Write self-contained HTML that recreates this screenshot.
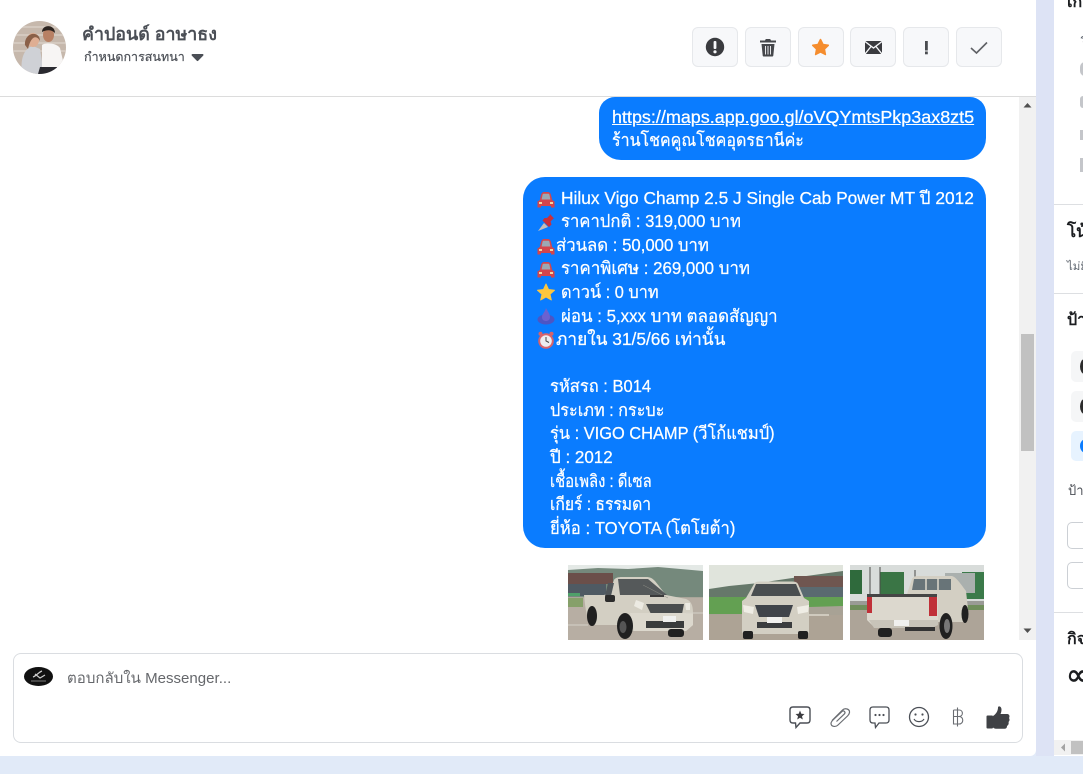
<!DOCTYPE html>
<html lang="th"><head><meta charset="utf-8">
<style>
html,body{margin:0;padding:0;width:1083px;height:774px;overflow:hidden;background:#e1eaf8;font-family:"Liberation Sans","Noto Sans CJK SC",sans-serif;color:#050505}
div,span,a,svg{position:absolute}
#main{left:0;top:0;width:1036px;height:756px;background:#fff;border-bottom-right-radius:6px}
#hline{left:0;top:96px;width:1036px;height:1px;background:#dcdcdc}
.btn{top:27px;width:44px;height:38px;background:#f7f8fa;border:1px solid #e6e8eb;border-radius:6px}
.btn svg{left:0;top:0}
.bub{background:#0a7cff}
.l{color:#fff;font-size:17.5px;line-height:24px;white-space:nowrap;height:24px;transform-origin:0 50%;-webkit-text-stroke:.25px #fff}
#sb{left:1019px;top:97px;width:17px;height:543px;background:#f1f1f1}
#right{left:1054px;top:0;width:29px;height:756px;background:#fff;overflow:hidden}
#right div{white-space:nowrap}
</style></head><body>
<div style="left:1036px;top:0;width:18px;height:756px;background:#dde3f5"></div>
<div id="main"></div>

<!-- avatar -->
<svg style="left:13px;top:21px" width="53" height="53" viewBox="0 0 53 53">
<defs><clipPath id="c"><circle cx="26.500" cy="26.500" r="26.500"/></clipPath></defs>
<g clip-path="url(#c)">
<rect width="53" height="53" fill="#c6b8ac"/>
<path d="M0 14H53M0 22H53M0 6H53M0 30H53" stroke="#d4c9bf" stroke-width="2"/>
<path d="M9 53C7 38 11 27 20 25L27 28L31 53Z" fill="#cfd1d6"/>
<ellipse cx="20" cy="19" rx="6" ry="7" fill="#dfae93"/>
<path d="M12 24C11 11 27 9 27 20C24 14 18 14 15 28Z" fill="#8a6048"/>
<path d="M29 53V24C32 21 44 22 47 27L51 44L46 46V53Z" fill="#f7f5f4"/>
<ellipse cx="35.500" cy="14" rx="5.500" ry="7" fill="#b88064"/>
<path d="M29 11C29 3 42 3 42 12C38 8 33 9 29 11Z" fill="#2c2420"/>
<path d="M25 53L27 46H44V53Z" fill="#2a2a30"/>
</g></svg>

<div style="left:82px;top:22px;font-size:17.500px;line-height:24px;color:#4b4f56;font-weight:700;white-space:nowrap;transform:scaleX(1.02);transform-origin:0 50%">คำปอนด์ อาษาธง</div>
<div style="left:84px;top:48px;font-size:12.500px;line-height:18px;color:#4b4f56;white-space:nowrap;-webkit-text-stroke:.2px #4b4f56">กำหนดการสนทนา</div>
<svg style="left:191px;top:54px" width="13" height="8" viewBox="0 0 13 8"><path d="M0.500 1C0.500 0.500 1 0 1.500 0H11.500C12.500 0 12.800 1 12.200 1.600L7.200 6.800C6.800 7.200 6.200 7.200 5.800 6.800L0.800 1.600Z" fill="#4b4f56"/></svg>
<div id="hline"></div>

<!-- header buttons -->
<div class="btn" style="left:692px"><svg width="44" height="38" viewBox="0 0 44 38"><circle cx="22" cy="19" r="9.200" fill="#3a3b3f"/><rect x="20.600" y="13" width="2.800" height="8" rx="1" fill="#f7f8fa"/><circle cx="22" cy="23.800" r="1.600" fill="#f7f8fa"/></svg></div>
<div class="btn" style="left:745px"><svg width="44" height="38" viewBox="0 0 44 38"><path d="M19.800 11H24.200L25 12.500H30V14.500H14V12.500H19Z" fill="#45474b"/><path d="M15.500 16H28.500L27.300 27.500C27.200 28.300 26.800 28.500 26.100 28.500H17.900C17.200 28.500 16.800 28.300 16.700 27.500Z" fill="#45474b"/><path d="M19.500 18V26.500M22 18V26.500M24.500 18V26.500" stroke="#f7f8fa" stroke-width=".9"/></svg></div>
<div class="btn" style="left:798px"><svg width="44" height="38" viewBox="0 0 44 38"><path d="M21.500 11.500L24 16.500L29.300 17.300L25.400 21.100L26.400 26.500L21.500 23.900L16.600 26.500L17.600 21.100L13.700 17.300L19 16.500Z" fill="#f58d2e" stroke="#f58d2e" stroke-width="1.500" stroke-linejoin="round"/></svg></div>
<div class="btn" style="left:850px"><svg width="44" height="38" viewBox="0 0 44 38"><rect x="14" y="13" width="17" height="13" rx="1" fill="#3a3b3f"/><path d="M14 13.500L22.500 20L31 13.500M14 26L20 18.500M31 26L25 18.500" stroke="#f7f8fa" stroke-width="1.400" fill="none"/></svg></div>
<div class="btn" style="left:903px"><svg width="44" height="38" viewBox="0 0 44 38"><rect x="21" y="13" width="2.800" height="9.500" fill="#4a4c50"/><rect x="21" y="23.500" width="2.800" height="2.800" fill="#4a4c50"/></svg></div>
<div class="btn" style="left:956px"><svg width="44" height="38" viewBox="0 0 44 38"><path d="M14 20L19.500 25L30 14.500" stroke="#5f6165" stroke-width="1.600" fill="none"/></svg></div>

<!-- bubble 1 -->
<div class="bub" style="left:599px;top:97px;width:387px;height:63px;border-radius:16px 16px 22px 22px"></div>
<div class="l" style="left:612px;top:105px;text-decoration:underline;transform:scaleX(1.0255)">https://maps.app.goo.gl/oVQYmtsPkp3ax8zt5</div>
<div class="l" style="left:612px;top:128px;transform:scaleX(.914)">ร้านโชคคูณโชคอุดรธานีค่ะ</div>

<!-- bubble 2 -->
<div class="bub" style="left:523px;top:177px;width:463px;height:371px;border-radius:22px"></div>
<svg style="left:537px;top:189px" width="19" height="170" viewBox="0 0 19 170">
<g id="car"><path d="M0.500 18.500V12.500L2.800 11L4 6C4.500 4 5.500 3 7 3H11C12.500 3 13.500 4 14 6L15.200 11L17.500 12.500V18.500H14V17H4V18.500Z" fill="#d4454c"/><path d="M4.600 10.500L5.500 6C5.700 5 6 4.800 7 4.800H11C12 4.800 12.300 5 12.500 6L13.400 10.500Z" fill="#9ba8b5"/><rect x="2" y="13" width="3" height="2" fill="#f2d6a0"/><rect x="13" y="13" width="3" height="2" fill="#f2d6a0"/></g>
<g transform="translate(0,23)"><path d="M1 19L7 11L11 15Z" fill="#c8bdb8"/><path d="M5.500 8.500L12 15L14.500 12.500L13.500 9.500L16.500 6.500L17.500 7L12.500 1.500L13 3L10 6L7.500 6Z" fill="#c8303c"/></g>
<use href="#car" transform="translate(0,47)"/>
<use href="#car" transform="translate(0,70)"/>
<g transform="translate(0,94)"><path d="M9 1L11.500 6.500L17.500 7.200L13 11.200L14.300 17L9 14L3.700 17L5 11.200L0.500 7.200L6.500 6.500Z" fill="#fdc63f" stroke="#fdc63f" stroke-linejoin="round"/></g>
<g transform="translate(0,117)"><ellipse cx="9" cy="13.500" rx="8.500" ry="5" fill="#4d55c4"/><path d="M9 2C11 6 13 8 13 11C13 14 11 15 9 15C7 15 5 14 5 11C5 8 8 6 9 2Z" fill="#6a62d0"/></g>
<g transform="translate(0,141)"><circle cx="9" cy="11" r="6.800" fill="#ececf0" stroke="#d8626a" stroke-width="2"/><path d="M9 7V11L12 12.500" stroke="#444" stroke-width="1" fill="none"/><circle cx="3.500" cy="3.800" r="2" fill="#d8626a"/><circle cx="14.500" cy="3.800" r="2" fill="#d8626a"/></g>
</svg>
<div class="l" style="left:561px;top:186px;transform:scaleX(.99)">Hilux Vigo Champ 2.5 J Single Cab Power MT ปี 2012</div>
<div class="l" style="left:561px;top:209px;transform:scaleX(.952)">ราคาปกติ : 319,000 บาท</div>
<div class="l" style="left:556px;top:233px;transform:scaleX(.956)">ส่วนลด : 50,000 บาท</div>
<div class="l" style="left:561px;top:256px;transform:scaleX(.964)">ราคาพิเศษ : 269,000 บาท</div>
<div class="l" style="left:561px;top:280px;transform:scaleX(.933)">ดาวน์ : 0 บาท</div>
<div class="l" style="left:561px;top:304px;transform:scaleX(.964)">ผ่อน : 5,xxx บาท ตลอดสัญญา</div>
<div class="l" style="left:556px;top:327px;transform:scaleX(.988)">ภายใน 31/5/66 เท่านั้น</div>
<div class="l" style="left:550px;top:374px;transform:scaleX(.944)">รหัสรถ : B014</div>
<div class="l" style="left:550px;top:398px;transform:scaleX(.927)">ประเภท : กระบะ</div>
<div class="l" style="left:550px;top:421px;transform:scaleX(.9375)">รุ่น : VIGO CHAMP (วีโก้แชมป์)</div>
<div class="l" style="left:550px;top:445px;transform:scaleX(.97)">ปี : 2012</div>
<div class="l" style="left:550px;top:469px;transform:scaleX(.85)">เชื้อเพลิง : ดีเซล</div>
<div class="l" style="left:550px;top:492px;transform:scaleX(.894)">เกียร์ : ธรรมดา</div>
<div class="l" style="left:550px;top:516px;transform:scaleX(.954)">ยี่ห้อ : TOYOTA (โตโยต้า)</div>

<!-- car photos -->
<svg style="left:568px;top:565px" width="135" height="75" viewBox="0 0 135 75">
<rect width="135" height="75" fill="#b7aea3"/><rect width="135" height="6" fill="#e4e9e6"/>
<path d="M0 5L30 3L60 4L90 2L135 6V32H0Z" fill="#75897c"/>
<rect y="8" width="45" height="11" fill="#6b4f4a"/><rect y="19" width="38" height="12" fill="#4f5a63"/><rect y="28" width="12" height="3" fill="#4fa06a"/>
<rect y="32" width="15" height="10" fill="#86a06a"/>
<rect x="0" y="32" width="135" height="1" fill="#a9a69a"/>
<path d="M16 30H36L41 28L46 15C47 13 50 12 54 12H78C82 12 84 13 87 16L98 30L118 34C123 36 125 40 125 48V60L118 66H62L50 60H22C18 50 17 40 16 30Z" fill="#d3cfc3"/>
<path d="M50 14H80L99 30H52Z" fill="#55595a"/><path d="M40 18H46L43 31H37Z" fill="#50565a"/><rect x="37" y="30" width="10" height="7" rx="2" fill="#2c2c2c"/>
<path d="M78 39H116L114 49H83Z" fill="#4a4d4e"/><path d="M68 35L76 38L74 45L66 41Z" fill="#eceae2"/><path d="M117 38L122 38L122 45L118 45Z" fill="#eceae2"/>
<path d="M62 48H125V60L118 66H66Z" fill="#dcd8cd"/><path d="M78 56H116V63H78Z" fill="#3a3c3c"/>
<path d="M75 20L100 33" stroke="#8e8f86" stroke-width=".5"/><rect x="82" y="30" width="14" height="2" fill="#3a3a3a"/>
<ellipse cx="24" cy="51" rx="5" ry="10" fill="#202020"/><ellipse cx="57" cy="61" rx="8" ry="13" fill="#202020"/><ellipse cx="55" cy="62" rx="3.500" ry="6" fill="#555"/><rect x="100" y="64" width="16" height="8" rx="3" fill="#202020"/>
<rect x="95" y="51" width="13" height="6" fill="#f0f0ee"/>
<path d="M0 60H20M118 48H135" stroke="#d6d2c8" stroke-width="1"/>
</svg>
<svg style="left:709px;top:565px" width="134" height="75" viewBox="0 0 134 75">
<rect width="134" height="75" fill="#ada395"/><rect width="134" height="24" fill="#e0e4dc"/>
<path d="M0 24L20 21L50 18L90 12L134 6V32H0Z" fill="#66786a"/><rect x="85" y="11" width="49" height="11" fill="#6f5650"/><rect x="88" y="22" width="46" height="10" fill="#5a6a70"/>
<rect y="32" width="134" height="17" fill="#63a052"/><path d="M0 49L40 50L100 42L134 41V50H0Z" fill="#a8a295"/>
<path d="M33 36L37 33L45 19C46 17 48 16.500 52 16.500H82C86 16.500 88 17 89 19L95 33L100 36V66C100 68 99 69 97 69H36C34 69 33 68 33 66Z" fill="#d3cfc3"/>
<path d="M42 31L47 19H87L92 31Z" fill="#4a4e50"/><path d="M46 40H84L80 52H50Z" fill="#40444a"/><path d="M48 57H83V63H48Z" fill="#3a3c3e"/>
<path d="M34 40L45 42L44 49L35 47ZM100 40L88 42L89 49L99 47Z" fill="#efede5"/>
<rect x="58" y="52" width="15" height="6" fill="#f0f0ee"/>
<rect x="34" y="66" width="10" height="8" rx="2" fill="#202020"/><rect x="89" y="66" width="10" height="8" rx="2" fill="#202020"/>
<path d="M100 50H120" stroke="#dcd8cc" stroke-width="1.500"/>
</svg>
<svg style="left:850px;top:565px" width="134" height="75" viewBox="0 0 134 75">
<rect width="134" height="75" fill="#ada498"/><rect width="134" height="36" fill="#d8dcda"/>
<rect x="0" y="5" width="12" height="24" fill="#2f6a3c"/><rect x="30" y="7" width="24" height="27" fill="#3a7545"/><rect x="112" y="7" width="22" height="27" fill="#3b7a4a"/><rect x="95" y="8" width="30" height="20" fill="#aab0ae"/>
<path d="M20 2V30M30 2V30M65 5V20" stroke="#4a4a48" stroke-width="1"/>
<rect y="36" width="134" height="8" fill="#9a9b96"/><rect y="40" width="134" height="5" fill="#708e5c"/>
<path d="M57 29L62 14C63 12 65 11 68 11H102C106 12 110 18 116 26L118 44L116 57H87Z" fill="#d3cfc3"/><path d="M64 14H101V25H62Z" fill="#687478"/><path d="M76 13V25M88 13V25" stroke="#dcd8cc" stroke-width="1.500"/>
<path d="M17 31H88V58L82 62H24L17 55Z" fill="#dcd8ce"/><rect x="17" y="29" width="70" height="3" fill="#454545"/>
<rect x="17" y="32" width="5" height="16" fill="#c03038"/><rect x="79" y="32" width="8" height="19" fill="#c03038"/>
<path d="M19 55H88V60L82 63H24Z" fill="#c8c4b9"/>
<rect x="28" y="63" width="14" height="9" rx="3" fill="#202020"/><rect x="55" y="62" width="30" height="4" fill="#333"/><ellipse cx="96" cy="61" rx="6.500" ry="13" fill="#202020"/><ellipse cx="97" cy="61" rx="3" ry="7" fill="#777"/><ellipse cx="115" cy="49" rx="3.500" ry="9" fill="#202020"/>
<rect x="44" y="55" width="15" height="6" fill="#f0f0ee"/>
</svg>

<!-- scrollbar -->
<div id="sb"></div>
<svg style="left:1023px;top:102px" width="9" height="6" viewBox="0 0 9 6"><path d="M0.500 5.500L4.500 1L8.500 5.500Z" fill="#505050"/></svg>
<div style="left:1021px;top:334px;width:13px;height:117px;background:#c1c1c1"></div>
<svg style="left:1023px;top:628px" width="9" height="6" viewBox="0 0 9 6"><path d="M0.500 0.500L4.500 5L8.500 0.500Z" fill="#505050"/></svg>

<!-- composer -->
<div style="left:13px;top:653px;width:1008px;height:88px;border:1px solid #dadde1;border-radius:8px;background:#fff"></div>
<svg style="left:24px;top:667px" width="30" height="20" viewBox="0 0 30 20"><ellipse cx="14.500" cy="9.500" rx="14.500" ry="9.500" fill="#111"/><path d="M9 10C12 9 15 5 18 4M11 7L16 11L21 8" stroke="#ccc" stroke-width="1.200" fill="none"/><path d="M7 14H22" stroke="#999" stroke-width=".8"/></svg>
<div style="left:67px;top:669px;font-size:14.500px;line-height:20px;color:#65676b;white-space:nowrap;transform:scaleX(1.038);transform-origin:0 50%">ตอบกลับใน Messenger...</div>

<svg style="left:788px;top:704px" width="24" height="26" viewBox="0 0 24 26"><path d="M5 3H19C21 3 22 4 22 6V16C22 18 21 19 19 19H12L8 23.500L7.500 19H5C3 19 2 18 2 16V6C2 4 3 3 5 3Z" fill="none" stroke="#4b4f56" stroke-width="1.400"/><path d="M12 6.500L13.300 9.700L16.500 10L14 12.200L14.800 15.500L12 13.800L9.200 15.500L10 12.200L7.500 10L10.700 9.700Z" fill="#3a3b3f"/></svg>
<svg style="left:829px;top:707px" width="23" height="21" viewBox="0 0 23 21"><path d="M3 13.500L13.500 3C16 0.500 21 2 20.500 5.500C20.300 7 19.500 8 18.500 9L9 18C6.500 20.500 2 19.500 2 16.500C2 15 3 14 4 13L13 4.500C14.500 3 17 5 15.500 6.800L7.500 14.500" fill="none" stroke="#6a6d72" stroke-width="1.200"/></svg>
<svg style="left:868px;top:704px" width="23" height="26" viewBox="0 0 23 26"><path d="M5 3H18C20 3 21 4 21 6V16C21 18 20 19 18 19H11L7.500 23.500L7 19H5C3 19 2 18 2 16V6C2 4 3 3 5 3Z" fill="none" stroke="#4b4f56" stroke-width="1.300"/><circle cx="7.500" cy="11" r="1.100" fill="#4b4f56"/><circle cx="11.500" cy="11" r="1.100" fill="#4b4f56"/><circle cx="15.500" cy="11" r="1.100" fill="#4b4f56"/></svg>
<svg style="left:908px;top:706px" width="22" height="22" viewBox="0 0 22 22"><circle cx="11" cy="11" r="9.500" fill="none" stroke="#4b4f56" stroke-width="1.300"/><circle cx="7.500" cy="8.500" r="1.100" fill="#4b4f56"/><circle cx="14.500" cy="8.500" r="1.100" fill="#4b4f56"/><path d="M6 13C8 16.500 14 16.500 16 13" fill="none" stroke="#4b4f56" stroke-width="1.200"/></svg>
<svg style="left:951px;top:706px" width="14" height="22" viewBox="0 0 14 22"><path d="M2.500 4H8C12.500 4 12.500 10.500 8 10.500H3M8 10.500C13 10.500 13 18 8 18H2.500V4M6.500 1.500V20.500" fill="none" stroke="#6a6d72" stroke-width="1.100"/></svg>
<svg style="left:986px;top:706px" width="24" height="23" viewBox="0 0 24 23"><rect x="0.500" y="9.500" width="6.500" height="13" rx="1" fill="#3f4145"/><path d="M7 10C10 8 12 5 12 1.500C12 -0.500 15.500 0 15.500 3.500C15.500 5.500 15 7 14.500 8H21C23.500 8 24 10.500 23 12C24 13.500 23.500 15 22.500 16C23 17.500 22.500 19 21 20C21 22 20 22.800 18 22.800H11C9 22.800 8 22.500 7 21.500Z" fill="#3f4145"/></svg>

<!-- right panel -->
<div id="right">
 <div style="left:13px;top:-7px;font-size:16px;line-height:20px;font-weight:700;color:#1c1e21">เกี่ยวกับ</div>
 <div style="left:26px;top:31px;font-size:12px;line-height:16px;color:#606770">รายละเอียด</div>
 <div style="left:26px;top:62px;width:10px;height:14px;border-radius:5px;background:#c4c6ca"></div>
 <div style="left:26px;top:96px;width:10px;height:12px;border-radius:3px;background:#c4c6ca"></div>
 <div style="left:26px;top:130px;width:10px;height:10px;background:#c4c6ca"></div>
 <div style="left:26px;top:158px;width:8px;height:14px;background:#c4c6ca"></div>
 <div style="left:0;top:204px;width:29px;height:1px;background:#dddfe2"></div>
 <div style="left:13px;top:222px;font-size:17px;line-height:20px;font-weight:700;color:#1c1e21">โน้ต</div>
 <div style="left:13px;top:260px;font-size:11.500px;line-height:14px;color:#606770">ไม่มีโน้ต</div>
 <div style="left:0;top:293px;width:29px;height:1px;background:#dddfe2"></div>
 <div style="left:13px;top:311px;font-size:16px;line-height:20px;font-weight:700;color:#1c1e21">ป้ายกำกับ</div>
 <div style="left:17px;top:351px;width:20px;height:31px;background:#f5f6f7;border-radius:5px 0 0 5px"></div>
 <div style="left:26px;top:359px;width:9px;height:15px;border-radius:50%;border:3px solid #2c2c2c;border-right-color:transparent;box-sizing:border-box"></div>
 <div style="left:17px;top:391px;width:20px;height:31px;background:#f5f6f7;border-radius:5px 0 0 5px"></div>
 <div style="left:26px;top:399px;width:9px;height:15px;border-radius:50%;border:3px solid #2c2c2c;border-right-color:transparent;box-sizing:border-box"></div>
 <div style="left:17px;top:431px;width:20px;height:30px;background:#e7f3ff;border-radius:5px 0 0 5px"></div>
 <div style="left:26px;top:439px;width:12px;height:14px;border-radius:50%;background:#0a7cff"></div>
 <div style="left:14px;top:482px;font-size:13px;line-height:18px;color:#4b4f56">ป้ายกำกับ</div>
 <div style="left:13px;top:522px;width:40px;height:25px;border:1px solid #ccd0d5;border-radius:5px"></div>
 <div style="left:13px;top:562px;width:40px;height:25px;border:1px solid #ccd0d5;border-radius:5px"></div>
 <div style="left:0;top:612px;width:29px;height:1px;background:#dddfe2"></div>
 <div style="left:13px;top:630px;font-size:16px;line-height:20px;font-weight:700;color:#1c1e21">กิจกรรม</div>
 <div style="left:12px;top:658px;font-size:30px;line-height:36px;color:#1c1e21;font-family:'DejaVu Sans',sans-serif;-webkit-text-stroke:.6px #1c1e21">∝</div>
</div>
<div style="left:1054px;top:740px;width:29px;height:15px;background:#f1f1f1"></div>
<svg style="left:1060px;top:743px" width="6" height="9" viewBox="0 0 6 9"><path d="M5 0.500L1 4.500L5 8.500Z" fill="#a3a3a3"/></svg>
<div style="left:1071px;top:741px;width:12px;height:13px;background:#c1c1c1"></div>
</body></html>
